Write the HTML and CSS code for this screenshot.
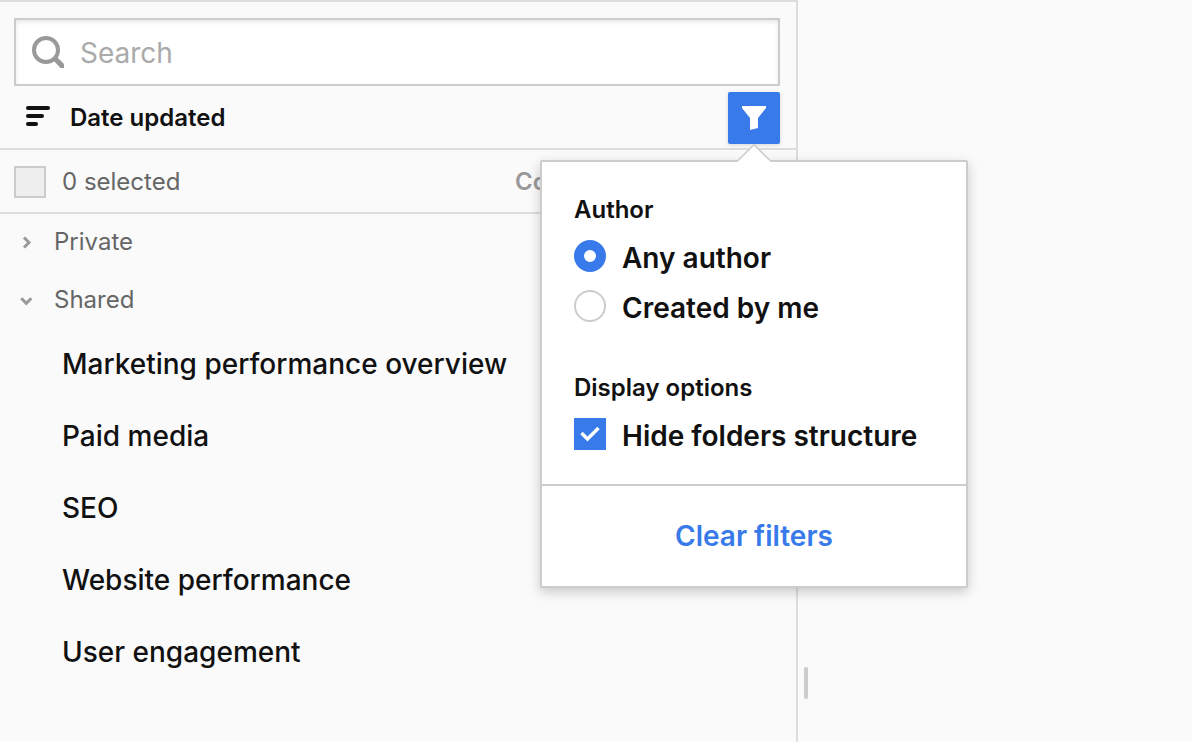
FILE: index.html
```html
<!DOCTYPE html>
<html lang="en">
<head>
    <meta charset="UTF-8">
    <meta name="viewport" content="width=device-width, initial-scale=1.0">
    <title>Dashboards</title>
    <link rel="stylesheet" href="styles.css">
</head>
<body>
    <div class="layout">
        <aside class="sidebar">
            <div class="search">
                <svg class="search-icon" viewBox="0 0 32 32" aria-hidden="true">
                    <circle cx="14" cy="14" r="12" fill="none" stroke="currentColor" stroke-width="4"/>
                    <path d="M21 24 24.5 20.5 32 28V32H28.5z" fill="currentColor"/>
                </svg>
                <input type="text" class="search-input" placeholder="Search" aria-label="Search">
            </div>

            <div class="toolbar">
                <button type="button" class="sort-button">
                    <svg class="sort-icon" viewBox="0 0 24 24" aria-hidden="true">
                        <path d="M2 2H22M2 10H16M2 18H10" fill="none" stroke="currentColor" stroke-width="4" stroke-linecap="round"/>
                    </svg>
                    Date updated
                </button>
                <div class="filter">
                    <button type="button" class="filter-button" aria-label="Filters">
                        <svg class="filter-icon" viewBox="0 0 24 24" aria-hidden="true">
                            <path d="M0 0H24V2L16 12V22L8 24V12L0 2z" fill="currentColor"/>
                        </svg>
                    </button>
                    <div class="popover">
                        <svg class="popover-arrow" viewBox="0 0 32 18" aria-hidden="true">
                            <path d="M0 18V16L16 0 32 16V18z" fill="#fff"/>
                            <path d="M0 16.5 16 .7 32 16.5" fill="none" stroke="#ccc" stroke-width="1.6"/>
                        </svg>
                        <div class="popover-body">
                            <fieldset class="group">
                                <legend class="group-title">Author</legend>
                                <label class="option">
                                    <input type="radio" class="radio" name="author" checked>
                                    <span class="option-text">Any author</span>
                                </label>
                                <label class="option">
                                    <input type="radio" class="radio" name="author">
                                    <span class="option-text">Created by me</span>
                                </label>
                            </fieldset>
                            <fieldset class="group">
                                <legend class="group-title">Display options</legend>
                                <label class="option">
                                    <span class="check">
                                        <input type="checkbox" class="checkbox" checked>
                                        <svg class="check-icon" viewBox="0 0 32 32" aria-hidden="true">
                                            <path d="M7.5 15 13.5 21 24.5 10" fill="none" stroke="#fff" stroke-width="3.4"/>
                                        </svg>
                                    </span>
                                    <span class="option-text">Hide folders structure</span>
                                </label>
                            </fieldset>
                        </div>
                        <button type="button" class="clear-button">Clear filters</button>
                    </div>
                </div>
            </div>

            <div class="selection">
                <label class="select-all">
                    <input type="checkbox" class="checkbox" disabled>
                    0 selected
                </label>
                <button type="button" class="copy-button" disabled>Copy</button>
            </div>

            <nav class="folders">
                <button type="button" class="folder">
                    <svg class="chevron" viewBox="0 0 24 24" aria-hidden="true">
                        <path d="M10 7.5 15 12.5 10 17.5" fill="none" stroke="currentColor" stroke-width="3"/>
                    </svg>
                    Private
                </button>
                <button type="button" class="folder">
                    <svg class="chevron" viewBox="0 0 24 24" aria-hidden="true">
                        <path d="M7.3 10.3 12.3 15.3 17.3 10.3" fill="none" stroke="currentColor" stroke-width="3"/>
                    </svg>
                    Shared
                </button>
                <ul class="dashboards">
                    <li><a href="#">Marketing performance overview</a></li>
                    <li><a href="#">Paid media</a></li>
                    <li><a href="#">SEO</a></li>
                    <li><a href="#">Website performance</a></li>
                    <li><a href="#">User engagement</a></li>
                </ul>
            </nav>
        </aside>

        <main class="content">
            <div class="resize-handle"></div>
        </main>
    </div>
</body>
</html>
```

FILE: styles.css
```css
:root {
    --blue: #387aea;
    --text: #111;
    --muted: #666;
    --disabled: #999;
    --border: #ccc;
    --line: #ddd;
    --bg: #fafafa;
}

* {
    box-sizing: border-box;
}

body {
    margin: 0;
    font-family: Inter, "Liberation Sans", sans-serif;
    font-size: 24px;
    line-height: 32px;
    color: var(--text);
    background: var(--bg);
}

button,
input {
    font: inherit;
    color: inherit;
}

button {
    padding: 0;
    border: none;
    background: none;
    cursor: pointer;
}

.layout {
    display: flex;
    min-height: 100vh;
}

.sidebar {
    flex: 1;
    border-top: 2px solid var(--line);
    border-right: 2px solid var(--line);
}

.content {
    display: flex;
    align-items: flex-end;
    width: 394px;
    padding: 0 6px 43px;
}

.resize-handle {
    width: 4px;
    height: 32px;
    border-radius: 2px;
    background: var(--border);
}

/* search */
.search {
    display: flex;
    align-items: center;
    gap: 16px;
    height: 68px;
    margin: 16px 16px 0 14px;
    padding: 0 16px;
    border: 2px solid var(--border);
    background: #fff;
    box-shadow: inset 0 2px 4px rgba(0, 0, 0, 0.1);
}

.search-icon {
    width: 32px;
    height: 32px;
    color: var(--disabled);
}

.search-input {
    flex: 1;
    min-width: 0;
    padding: 2px 0 0;
    border: none;
    outline: none;
    background: transparent;
    font-size: 28px;
}

.search-input::placeholder {
    color: #aaa;
    opacity: 1;
}

/* toolbar */
.toolbar {
    display: flex;
    align-items: center;
    justify-content: space-between;
    padding: 6px 16px 4px 26px;
    border-bottom: 2px solid var(--line);
}

.sort-button {
    display: flex;
    align-items: center;
    gap: 20px;
    font-weight: 600;
}

.sort-icon {
    width: 24px;
    height: 24px;
}

.filter {
    position: relative;
}

.filter-button {
    display: flex;
    align-items: center;
    justify-content: center;
    width: 52px;
    height: 52px;
    border-radius: 2px;
    color: #fff;
    background: var(--blue);
    box-shadow: 0 1px 4px rgba(0, 0, 0, 0.15);
}

.filter-icon {
    width: 24px;
    height: 24px;
}

/* filter popover */
.popover {
    position: absolute;
    top: 68px;
    left: 50%;
    z-index: 1;
    width: 428px;
    margin-left: -214px;
    border: 2px solid var(--border);
    border-radius: 2px;
    background: #fff;
    box-shadow: 0 4px 12px rgba(0, 0, 0, 0.2);
}

.popover-arrow {
    position: absolute;
    top: -18px;
    left: 50%;
    width: 32px;
    height: 18px;
    margin-left: -16px;
}

.popover-body {
    display: flex;
    flex-direction: column;
    gap: 46px;
    padding: 32px 32px 30px;
}

.group {
    display: flex;
    flex-direction: column;
    gap: 14px;
    min-width: 0;
    margin: 0;
    padding: 0;
    border: none;
}

.group-title {
    margin-bottom: 14px;
    padding: 0;
    font-weight: 600;
}

.option {
    display: flex;
    align-items: flex-start;
    gap: 16px;
    font-size: 28px;
    font-weight: 600;
}

/* sits the label on the optical centre of the control */
.option-text {
    padding: 2px 0;
}

.radio,
.checkbox {
    flex: none;
    appearance: none;
    width: 32px;
    height: 32px;
    margin: 0;
    border: 2px solid var(--border);
    background: #fff;
}

.radio {
    border-radius: 50%;
}

.radio:checked {
    border: 10px solid var(--blue);
}

.checkbox:checked {
    border-color: var(--blue);
    background: var(--blue);
}

.checkbox:disabled {
    background: #eee;
}

.check {
    display: grid;
}

.check > * {
    grid-area: 1 / 1;
}

.check-icon {
    width: 32px;
    height: 32px;
}

.clear-button {
    display: block;
    width: 100%;
    height: 102px;
    border-top: 2px solid var(--border);
    font-size: 28px;
    font-weight: 600;
    color: var(--blue);
}

/* bulk selection */
.selection {
    display: flex;
    align-items: center;
    justify-content: space-between;
    height: 64px;
    padding: 2px 220px 0 14px;
    border-bottom: 2px solid var(--line);
    color: var(--muted);
}

.select-all {
    display: flex;
    align-items: center;
    gap: 16px;
}

.copy-button {
    font-weight: 600;
    color: var(--disabled);
}

/* folders */
.folder {
    display: flex;
    align-items: center;
    gap: 16px;
    width: 100%;
    height: 58px;
    padding: 0 14px 2px;
    color: var(--muted);
}

.chevron {
    width: 24px;
    height: 24px;
    color: var(--disabled);
}

.dashboards {
    margin: 0;
    padding: 0;
    list-style: none;
}

.dashboards a {
    display: block;
    padding: 18px 16px 22px 62px;
    font-size: 28px;
    font-weight: 500;
    color: inherit;
    text-decoration: none;
}
```
